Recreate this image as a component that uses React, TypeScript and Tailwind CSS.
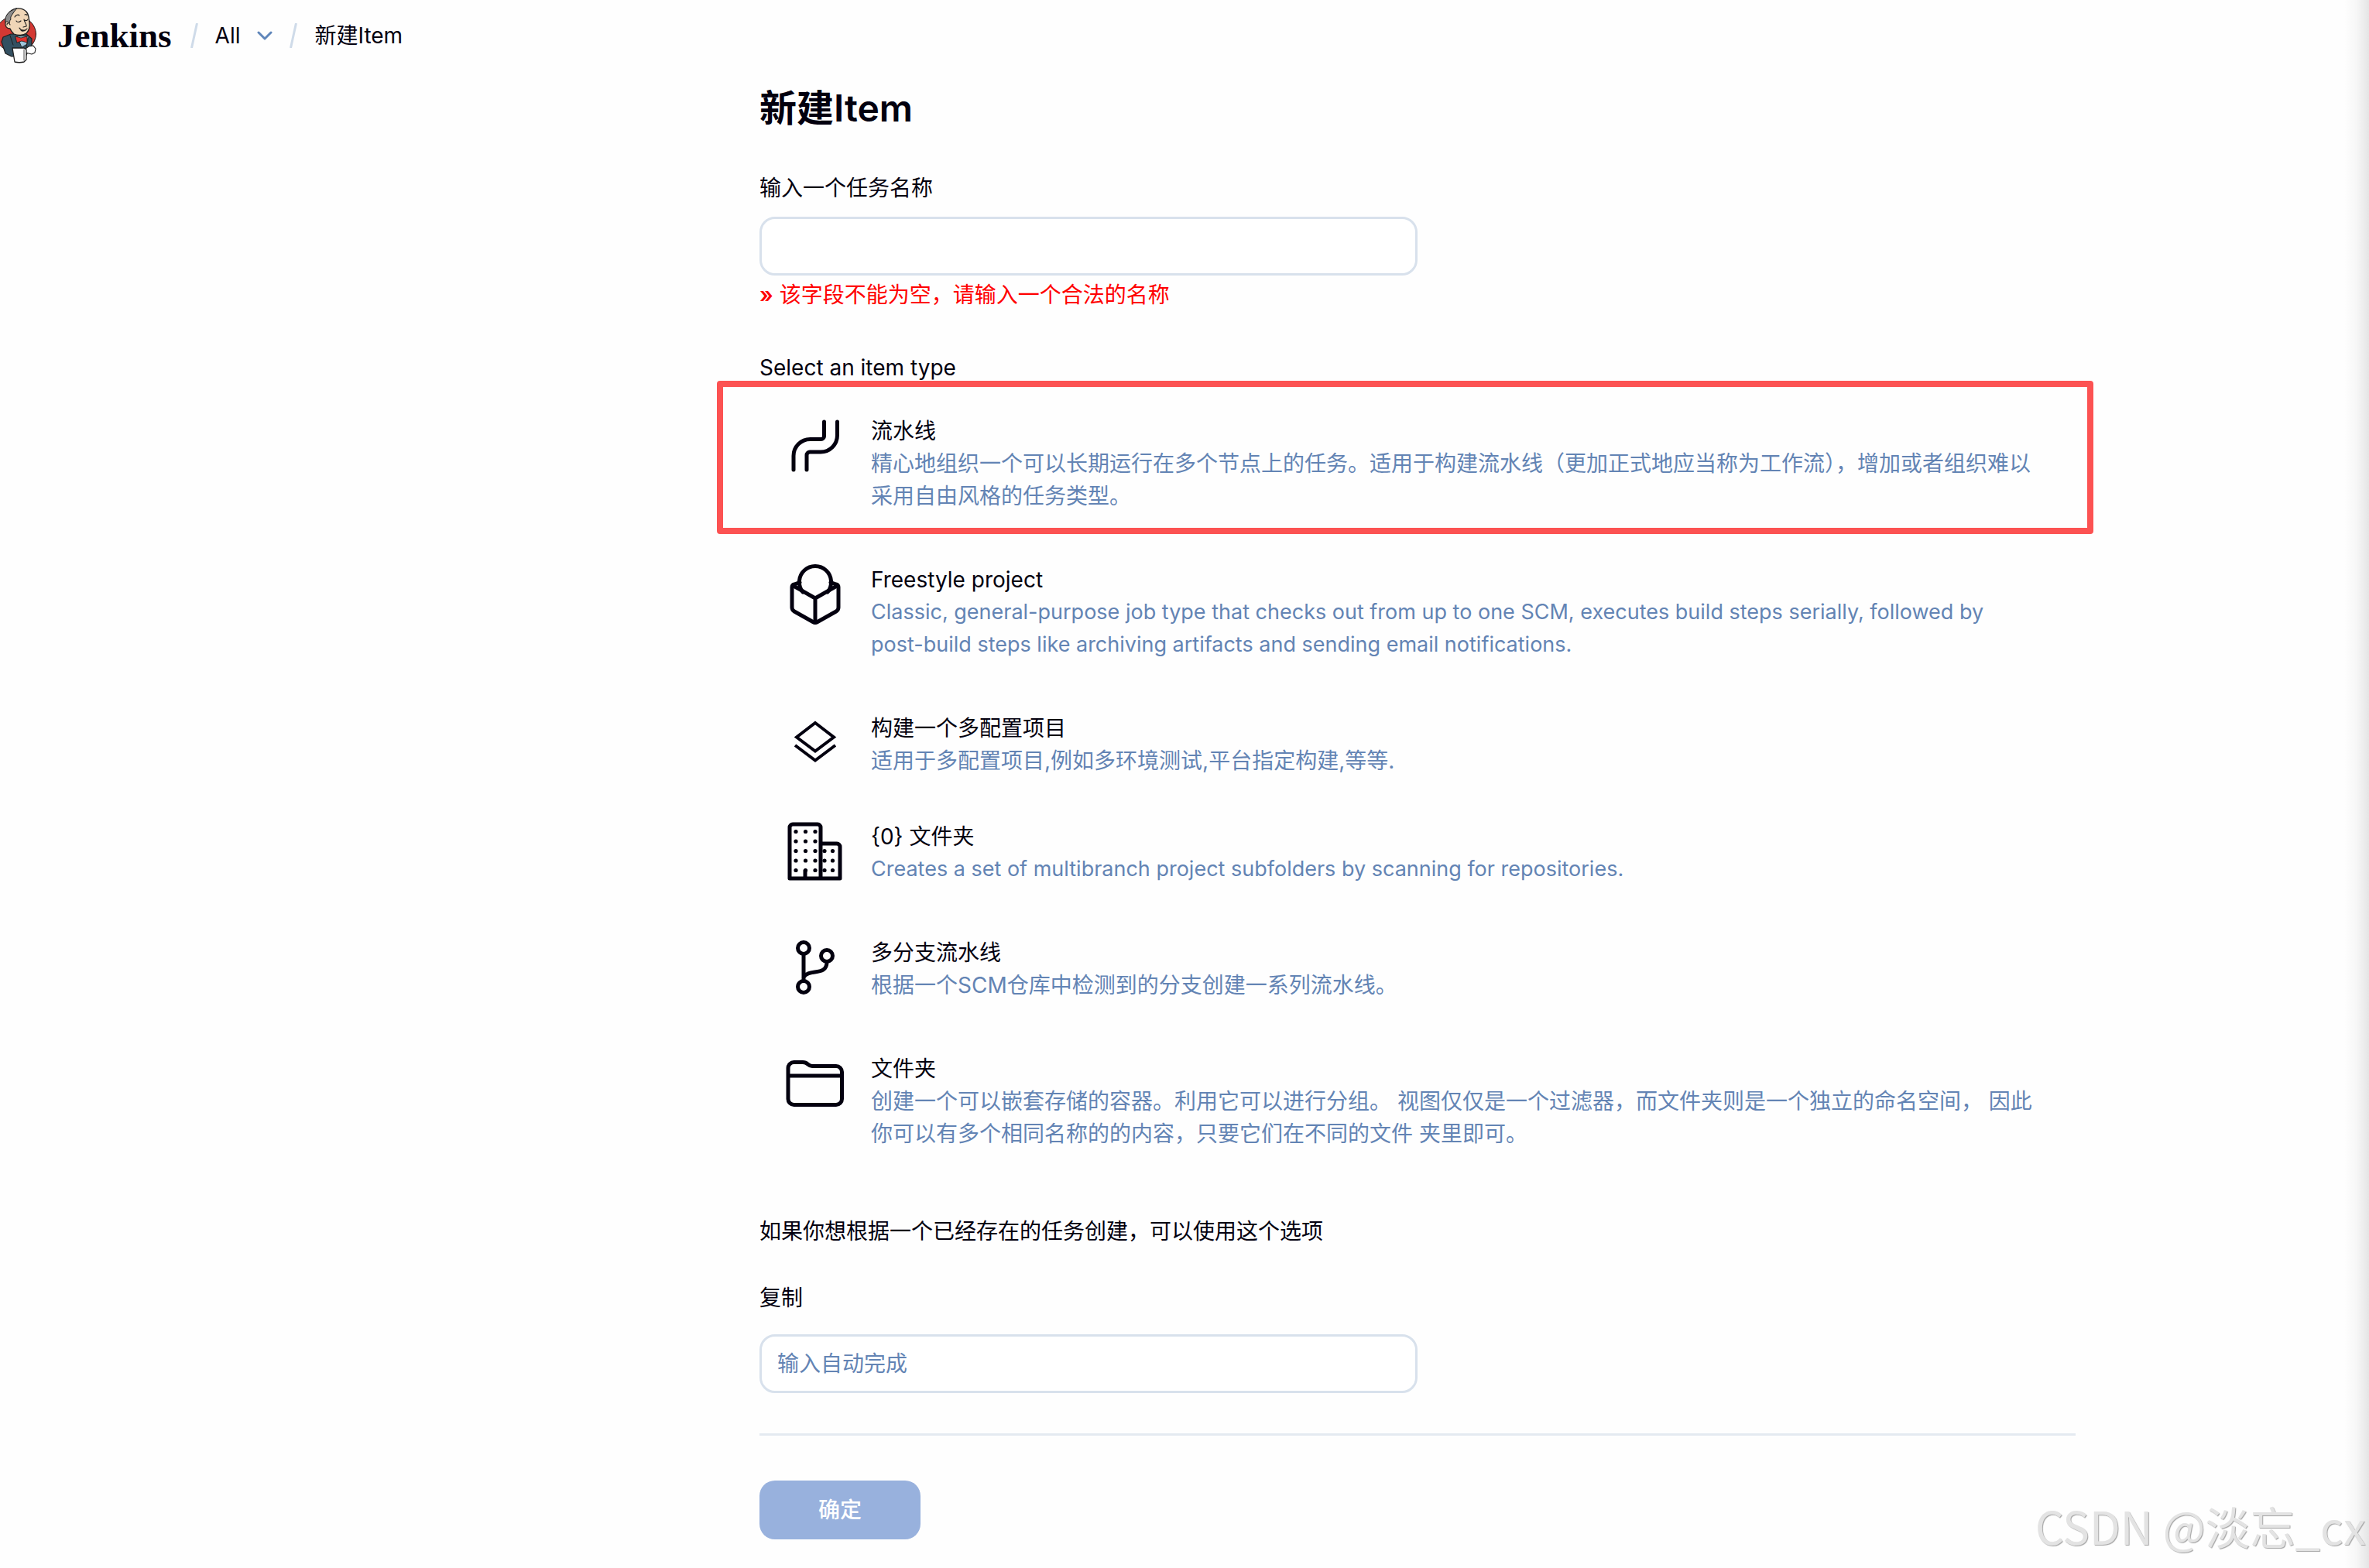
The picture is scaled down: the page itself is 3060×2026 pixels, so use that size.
import type { ReactNode } from "react";

const strokeProps = {
    fill: "none",
    stroke: "currentColor",
    strokeLinecap: "round" as const,
    strokeLinejoin: "round" as const,
};

// Item type icons, all on an 80x80 grid

function PipelineIcon() {
    return (
        <svg viewBox="0 0 80 80" className="size-20" {...strokeProps} strokeWidth="5">
            <path d="M51.500 9v18.500a4 4 0 0 1-4 4H33.500A21.500 21.500 0 0 0 12 53v18" />
            <path d="M68.500 9v17.500A21.500 21.500 0 0 1 47 48H33a4 4 0 0 0-4 4v19" />
        </svg>
    );
}

function FreestyleIcon() {
    return (
        <svg viewBox="0 0 80 80" className="size-20" {...strokeProps} strokeWidth="5">
            <path d="M20 24.500 13 27a4 4 0 0 0-3 4v26a6 6 0 0 0 3 5l24 13.500a6 6 0 0 0 6 0l24-13.500a6 6 0 0 0 3-5V31a4 4 0 0 0-3-4l-7-2.500" />
            <path d="M12 29l28 16 28-16M40 45v31" />
            <path d="M24 37a20.600 20.600 0 1 1 32 0" />
        </svg>
    );
}

function LayersIcon() {
    return (
        <svg viewBox="0 0 80 80" className="size-20" fill="none" stroke="currentColor" strokeWidth="4">
            <path d="M40 14 64 32.500 40 50.500 16 32.500Z" />
            <path d="M14 43 40 62.500 66 43" />
        </svg>
    );
}

function BuildingIcon() {
    const left = [15, 27.5, 40];
    const right = [52, 62.5];
    const rows = [14.5, 27, 39.5, 52, 64.5];

    return (
        <svg viewBox="0 0 80 80" className="size-20" {...strokeProps} strokeWidth="5">
            <path d="M7 75V9a4 4 0 0 1 4-4h32a4 4 0 0 1 4 4v66ZM47 30h21a4 4 0 0 1 4 4v41H47M27 65v10" />
            <g fill="currentColor" stroke="none">
                {rows.map((y) => left.map((x) => <circle key={`${x}-${y}`} cx={x} cy={y} r="2.6" />))}
                {rows.slice(2).map((y) => right.map((x) => <circle key={`${x}-${y}`} cx={x} cy={y} r="2.6" />))}
            </g>
        </svg>
    );
}

function BranchIcon() {
    return (
        <svg viewBox="0 0 80 80" className="size-20" {...strokeProps} strokeWidth="5">
            <circle cx="25" cy="15" r="7.5" />
            <circle cx="25" cy="65" r="7.5" />
            <circle cx="55" cy="25" r="7.5" />
            <path d="M25 23v34M55 33c0 19-24 8-30 20" />
        </svg>
    );
}

function FolderIcon() {
    return (
        <svg viewBox="0 0 80 80" className="size-20" {...strokeProps} strokeWidth="5">
            <path d="M5 60V20a7.500 7.500 0 0 1 7.500-7.500H24c7 0 6 5 12 5h31a7.500 7.500 0 0 1 7.500 7.500v35a7.500 7.500 0 0 1-7.500 7.500H12.500A7.500 7.500 0 0 1 5 60ZM5 30h69" />
        </svg>
    );
}

function JenkinsLogo() {
    return (
        <svg viewBox="0 10 48 72" className="h-[72px] w-12 shrink-0" stroke="#1f1f1f" strokeLinejoin="round" strokeLinecap="round">
            <ellipse cx="20.500" cy="44" rx="26" ry="23.500" fill="#d33833" strokeWidth="1" />
            {/* Suit */}
            <path d="M14 44 4 48l-2 6 5 15 8 4h18l4-8 4-5V50l-7-6Z" fill="#335061" strokeWidth="1.200" />
            <path d="M22 47l6 14 7-4 2-10Z" fill="#9fc6dc" strokeWidth=".8" />
            <path d="M13 46l4 12M36 49l-2 12" fill="none" strokeWidth="1" />
            {/* Head */}
            <path d="M13 15C18 10 28 9 34 15c4 5 3 9 4 14 1 7-1 11-4 14-4 3-11 3-16 1-2-2-4-4-5-7-4 0-7-3-6-8 0-6 2-10 6-14Z" fill="#f0d6b7" strokeWidth="1.300" />
            <path d="M16 13c-6 3-10 8-9 16 2-2 4-1 5 1 1-2 0-3 2-5-1-3 1-5 3-8 1-2 3-4 5-6-2 0-4 1-6 2Z" fill="#8b8b8b" strokeWidth="1" />
            <path d="M9 32c0-3 3-3 4 0M19 22c1-2 4-4 6-2M32 19c2-1 3 0 3 1M21 27c1 2 4 2 6 0M32 26c1 1 3 1 4-1M31 25c0 3 4 7 3 9l-4 1M25 36c2 4 8 4 10 1M27 39c2 2 5 1 7-1" fill="none" strokeWidth="1.100" />
            {/* Bow tie */}
            <path d="M20 47l7 2 8-2v8l-7-2-6 2Z" fill="#e0322e" strokeWidth=".8" />
            {/* Hand and mug */}
            <path d="M33 63l4-3 6-1 3 4-1 5-4 2-8-2Z" fill="#fff" strokeWidth="1.100" />
            <path d="M16 62h15l3 2v13l-3 3c-4 1-8 1-12 0Z" fill="#fff" strokeWidth="1.300" />
            <path d="M31 64v14" fill="none" strokeWidth=".8" />
        </svg>
    );
}

function Slash() {
    return (
        <svg viewBox="0 0 10 32" className="h-8 w-[10px] text-[#cfdbe9]" {...strokeProps} strokeLinecap="butt" strokeWidth="3">
            <path d="M8.500 0 1.500 32" />
        </svg>
    );
}

type ItemType = {
    title: string;
    description: ReactNode;
    icon: ReactNode;
    spacing: string;
    latin?: boolean;
    highlighted?: boolean;
};

const itemTypes: ItemType[] = [
    {
        title: "流水线",
        description: "精心地组织一个可以长期运行在多个节点上的任务。适用于构建流水线（更加正式地应当称为工作流），增加或者组织难以采用自由风格的任务类型。",
        icon: <PipelineIcon />,
        spacing: "mb-[10px]",
        highlighted: true,
    },
    {
        title: "Freestyle project",
        description: (
            <>
                Classic, general-purpose job type that checks out from up to one SCM, executes build steps serially,
                followed by <span className="whitespace-nowrap">post-build</span> steps like archiving artifacts and
                sending email notifications.
            </>
        ),
        icon: <FreestyleIcon />,
        spacing: "mb-[10px]",
        latin: true,
    },
    {
        title: "构建一个多配置项目",
        description: "适用于多配置项目,例如多环境测试,平台指定构建,等等.",
        icon: <LayersIcon />,
        spacing: "mb-0",
    },
    {
        title: "{0} 文件夹",
        description: "Creates a set of multibranch project subfolders by scanning for repositories.",
        icon: <BuildingIcon />,
        spacing: "mb-[10px]",
        latin: true,
    },
    {
        title: "多分支流水线",
        description: "根据一个SCM仓库中检测到的分支创建一系列流水线。",
        icon: <BranchIcon />,
        spacing: "mb-[10px]",
    },
    {
        title: "文件夹",
        description: "创建一个可以嵌套存储的容器。利用它可以进行分组。 视图仅仅是一个过滤器，而文件夹则是一个独立的命名空间， 因此你可以有多个相同名称的的内容，只要它们在不同的文件 夹里即可。",
        icon: <FolderIcon />,
        spacing: "mb-0",
    },
];

function ItemOption({ item }: { item: ItemType }) {
    return (
        <li className={`relative ${item.spacing}`}>
            <label className="flex gap-8 px-8 py-7">
                <input type="radio" name="mode" value={item.title} className="sr-only" />
                <span className="h-[84px] shrink-0">{item.icon}</span>
                <span className="min-w-0 flex-1">
                    <span className="block">{item.title}</span>
                    <span className={`block text-[#6384b4] ${item.latin ? "text-[27px]" : "text-[28px]"}`}>
                        {item.description}
                    </span>
                </span>
            </label>

            {item.highlighted && (
                <div className="pointer-events-none absolute -top-4 -right-[23px] bottom-0 -left-[55px] rounded-sm border-8 border-[#fc5252]" />
            )}
        </li>
    );
}

export default function App() {
    return (
        <div className="relative min-h-screen overflow-hidden bg-[#fefefe] font-['Inter','Noto_Sans_CJK_SC',sans-serif] text-[28px] leading-[42px] text-[#03000f]">

            {/* Header */}
            <header className="flex h-[92px] items-center">
                <a href="#" className="flex items-center gap-[26px]">
                    <JenkinsLogo />
                    <span className="font-['Liberation_Serif',serif] text-[45px] font-bold">Jenkins</span>
                </a>
                <nav className="flex items-center gap-[22px] pl-6">
                    <Slash />
                    <a href="#">All</a>
                    <button type="button" aria-label="All" className="text-[#5f86ba]">
                        <svg viewBox="0 0 20 12" className="h-3 w-5" {...strokeProps} strokeWidth="3">
                            <path d="M2 2l8 8 8-8" />
                        </svg>
                    </button>
                    <Slash />
                    <a href="#">新建Item</a>
                </nav>
            </header>

            {/* New item form */}
            <main className="mt-[18px] pr-[379px] pl-[981px]">
                <form>
                    <h1 className="text-[48px] leading-[60px] font-semibold">新建Item</h1>

                    <label htmlFor="name" className="mt-[52px] block">输入一个任务名称</label>
                    <input id="name" type="text" className="mt-4 block h-[76px] w-1/2 rounded-[20px] border-3 border-[#d8e1ec] bg-white px-5" />
                    <p className="mt-1 text-[#ff0000]">
                        <span className="font-semibold">»</span> 该字段不能为空，请输入一个合法的名称
                    </p>

                    <fieldset className="mt-[52px]">
                        <legend>Select an item type</legend>
                        <ul className="mt-3">
                            {itemTypes.map((item) => (
                                <ItemOption key={item.title} item={item} />
                            ))}
                        </ul>
                    </fieldset>

                    <p className="mt-14">如果你想根据一个已经存在的任务创建，可以使用这个选项</p>
                    <label htmlFor="from" className="mt-11 block">复制</label>
                    <input id="from" type="text" placeholder="输入自动完成" className="mt-[26px] block h-[76px] w-1/2 rounded-[20px] border-3 border-[#d8e1ec] bg-white px-5 placeholder:text-[#6384b4]" />

                    <div className="mt-[52px] border-t-3 border-[#e4eaf1] pt-[58px] pb-9">
                        <button type="submit" className="h-[76px] rounded-[20px] bg-[#98b1dd] px-[76px] font-medium text-white">确定</button>
                    </div>
                </form>
            </main>

            {/* Window edge shade */}
            <div className="pointer-events-none absolute inset-y-0 right-0 w-8 bg-linear-to-l from-black/10 via-black/3 to-transparent" />

            <div className="pointer-events-none absolute right-1 bottom-5 font-['Noto_Sans_CJK_SC',sans-serif] text-[58px] leading-[70px] text-[#e3e3e3] [text-shadow:1px_1px_1px_#a3a3a3]">
                CSDN @淡忘_cx
            </div>
        </div>
    );
}
